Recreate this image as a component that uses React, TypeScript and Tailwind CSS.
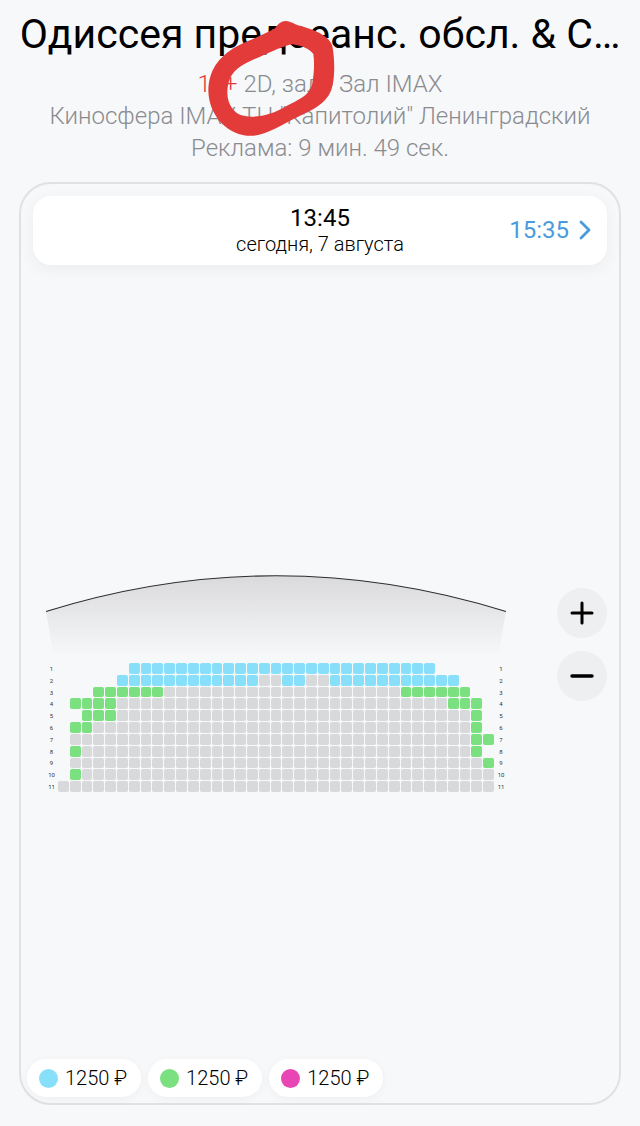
import { Fragment } from "react";

type SeatKind = "blue" | "green" | "taken" | "empty";

const COLUMNS = 37;

const SEAT_CODES: Record<string, SeatKind> = {
  b: "blue",
  g: "green",
  x: "taken",
  ".": "empty",
};

const SEAT_STYLES = {
  blue: "bg-[#88dffa]",
  green: "bg-[#7be07f]",
  taken: "bg-[#d8d9db]",
};

// every row is a list of runs: seat code followed by how many seats it covers
const ROWS = [
  ".6 b26 .5",
  ".5 b12 x2 b2 x2 b11 .3",
  ".3 g6 x20 g6 .2",
  ".1 g4 x28 g3 .1",
  ".2 g3 x30 g1 .1",
  ".1 g2 x32 g1 .1",
  ".1 x34 g2",
  ".1 g1 x33 g1 .1",
  ".1 x35 g1",
  ".1 g1 x35",
  "x37",
];

const PRICES = [
  { id: "blue", price: "1250 ₽", color: "bg-[#88dffa]" },
  { id: "green", price: "1250 ₽", color: "bg-[#7be07f]" },
  { id: "pink", price: "1250 ₽", color: "bg-[#e946b5]" },
];

const parseRow = (row: string): SeatKind[] =>
  row
    .split(" ")
    .flatMap((run) =>
      Array<SeatKind>(Number(run.slice(1))).fill(SEAT_CODES[run[0]])
    )
    .slice(0, COLUMNS);

const Header = () => {
  return (
    <header className="relative px-4 pt-2 text-center">
      <h1 className="text-[41px] leading-[52px] whitespace-nowrap text-black">
        Одиссея предсеанс. обсл. &amp; С…
      </h1>
      <div className="pt-2 text-[24px] leading-8 font-light whitespace-nowrap text-[#8a8b8f]">
        <p>
          <span className="text-[#e0393a]">18+</span> 2D, зал - Зал IMAX
        </p>
        <p>Киносфера IMAX ТЦ "Капитолий" Ленинградский</p>
        <p>Реклама: 9 мин. 49 сек.</p>
      </div>
      <svg
        className="pointer-events-none absolute top-[10px] left-1/2 -ml-[125px] h-[135px] w-[150px]"
        viewBox="0 0 450 405"
        aria-hidden="true"
      >
        <path
          fill="#e23b3a"
          fillRule="evenodd"
          d="M272 33C290 34 298 44 318 48C362 62 402 76 412 108C420 150 420 208 409 240C390 287 345 302 300 325C250 350 205 382 155 377C90 370 40 310 40 240C42 180 70 145 115 115C150 95 200 78 240 55C250 42 258 33 272 33ZM290 103C320 106 342 116 355 132C359 160 357 195 351 225C343 256 310 270 270 290C230 315 170 330 130 312C95 290 90 245 105 205C120 170 160 155 200 138C235 122 265 109 290 103Z"
        />
      </svg>
    </header>
  );
};

const SessionBar = () => {
  return (
    <div className="grid grid-cols-[1fr_auto_1fr] items-center rounded-[18px] bg-white px-3.5 pt-2 pb-[9px] shadow-[0_4px_16px_rgba(0,0,0,0.05)]">
      <div className="col-start-2 text-center text-black">
        <p className="text-[24px] leading-7">13:45</p>
        <p className="text-[20px] leading-6 font-light">сегодня, 7 августа</p>
      </div>
      <button className="flex items-center gap-2 justify-self-end text-[24px] leading-7 text-[#4a9bdd]">
        15:35
        <svg
          className="h-5 w-4"
          viewBox="0 0 16 20"
          fill="none"
          stroke="currentColor"
          strokeWidth="2.8"
          strokeLinecap="round"
          strokeLinejoin="round"
          aria-hidden="true"
        >
          <path d="M4 2L12 10L4 18" />
        </svg>
      </button>
    </div>
  );
};

const Screen = () => {
  return (
    <svg className="w-full" viewBox="0 0 462 82" fill="none" aria-hidden="true">
      <defs>
        <linearGradient id="screen-light" x1="0" y1="0" x2="0" y2="1">
          <stop offset="0" stopColor="#dadadc" />
          <stop offset="1" stopColor="#f7f8fa" />
        </linearGradient>
      </defs>
      <path d="M1 36.5Q231 -35 461 36.5L453 82H9Z" fill="url(#screen-light)" />
      <path d="M1 36.5Q231 -35 461 36.5" stroke="#2b2c30" strokeWidth="1.2" />
    </svg>
  );
};

const SeatMap = () => {
  return (
    <div className="w-[462px] pt-20">
      <Screen />
      <div className="mt-1.5 grid h-[130px] grid-cols-[13px_1fr_12px] grid-rows-[repeat(11,1fr)]">
        {ROWS.map((row, rowIndex) => (
          <Fragment key={rowIndex}>
            <span className="flex items-center justify-center text-[6px] leading-none text-[#333]">
              {rowIndex + 1}
            </span>
            <div className="grid grid-cols-[repeat(37,1fr)]">
              {parseRow(row).map((kind, seat) => {
                if (kind === "empty") return <span key={seat} />;
                return (
                  <button
                    key={seat}
                    disabled={kind === "taken"}
                    aria-label={`Ряд ${rowIndex + 1}, место ${seat + 1}`}
                    className="pr-px pb-px"
                  >
                    <span
                      className={`block h-full w-full rounded-[2px] ${SEAT_STYLES[kind]}`}
                    />
                  </button>
                );
              })}
            </div>
            <span className="flex items-center justify-center text-[6px] leading-none text-[#333]">
              {rowIndex + 1}
            </span>
          </Fragment>
        ))}
      </div>
    </div>
  );
};

const ZoomControls = () => {
  return (
    <div className="flex flex-col gap-[13px]">
      <button
        aria-label="Увеличить"
        className="flex size-[50px] items-center justify-center rounded-full bg-[#eeeff0] text-black"
      >
        <svg
          className="size-6"
          viewBox="0 0 24 24"
          stroke="currentColor"
          strokeWidth="3"
          strokeLinecap="round"
        >
          <path d="M2 12H22M12 2V22" />
        </svg>
      </button>
      <button
        aria-label="Уменьшить"
        className="flex size-[50px] items-center justify-center rounded-full bg-[#eeeff0] text-black"
      >
        <svg
          className="size-6"
          viewBox="0 0 24 24"
          stroke="currentColor"
          strokeWidth="3.4"
          strokeLinecap="round"
        >
          <path d="M2 12H22" />
        </svg>
      </button>
    </div>
  );
};

const Legend = () => {
  return (
    <ul className="flex gap-[7px]">
      {PRICES.map(({ id, price, color }) => (
        <li
          key={id}
          className="flex h-[38px] items-center gap-[7px] rounded-full bg-white pr-3.5 pl-3 text-[20px] leading-6 font-light text-black shadow-[0_2px_10px_rgba(0,0,0,0.04)]"
        >
          <span className={`size-[19px] rounded-full ${color}`} />
          {price}
        </li>
      ))}
    </ul>
  );
};

const App = () => {
  return (
    <div className="flex min-h-screen flex-col bg-[#f7f8fa] font-['Roboto',sans-serif]">
      <Header />
      <main className="mx-[19px] mt-[18px] mb-[21px] flex flex-1 flex-col rounded-[32px] border-2 border-[#e0e1e4]">
        <div className="px-3 pt-3">
          <SessionBar />
        </div>
        <div className="flex flex-1 items-center justify-between pr-3 pb-9 pl-6">
          <SeatMap />
          <ZoomControls />
        </div>
        <div className="px-1.5 pb-1.5">
          <Legend />
        </div>
      </main>
    </div>
  );
};

export default App;
